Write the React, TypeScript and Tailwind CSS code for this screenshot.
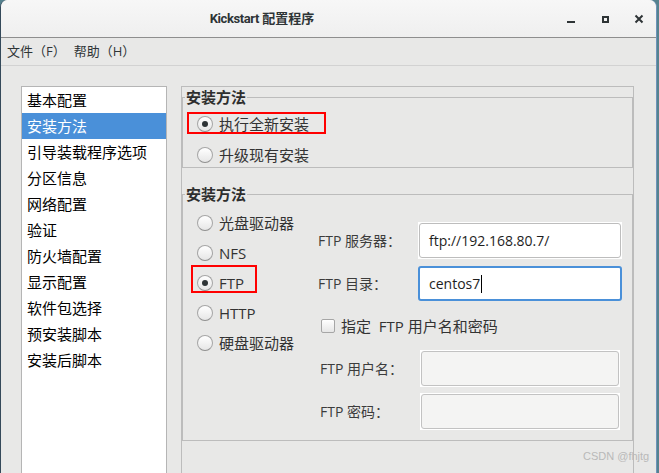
import React from "react";

const FONT = "font-['Open_Sans','Noto_Sans_CJK_SC',sans-serif]";

const navItems = [
  "基本配置",
  "安装方法",
  "引导装载程序选项",
  "分区信息",
  "网络配置",
  "验证",
  "防火墙配置",
  "显示配置",
  "软件包选择",
  "预安装脚本",
  "安装后脚本",
];

const sources = ["光盘驱动器", "NFS", "FTP", "HTTP", "硬盘驱动器"];

const Radio = ({ checked }: { checked?: boolean }) => (
  <span className="flex h-[16px] w-[16px] shrink-0 items-center justify-center rounded-full border border-[#a6a6a6] border-b-[#8f8f8f] bg-linear-to-b from-white to-[#e6e6e6]">
    {checked && <span className="h-[6px] w-[6px] rounded-full bg-[#2e3436]" />}
  </span>
);

// radio row, the red annotation box is drawn over it
const RadioRow = ({
  label,
  checked,
  mark,
}: {
  label: string;
  checked?: boolean;
  mark?: string;
}) => (
  <div className="relative flex h-[24px] items-center gap-[6px]">
    <Radio checked={checked} />
    <span className="text-[15px] text-[#333]">{label}</span>
    {mark && <span className={`absolute border-2 border-[#ff0000] ${mark}`} />}
  </div>
);

const Group = ({
  title,
  className,
  children,
}: {
  title: string;
  className?: string;
  children: React.ReactNode;
}) => (
  <fieldset className={`border border-[#bcbcbc] ${className ?? ""}`}>
    <legend className="ml-[2px] px-[1px] text-[15px] font-bold leading-[20px] text-[#2e2e2e]">
      {title}
    </legend>
    {children}
  </fieldset>
);

const TitleBar = () => (
  <div className="flex h-[38px] shrink-0 items-center rounded-t-[7px] border-b border-[#8e8e8e] bg-linear-to-b from-[#f7f7f7] to-[#efefef]">
    <div className="flex w-[522px] justify-center">
      <span className="text-[13px] font-bold text-[#2e3436]">
        <span className="font-['Roboto',sans-serif] text-[13px] tracking-[-0.4px]">Kickstart</span>{" "}
        配置程序
      </span>
    </div>
    <div className="flex items-center text-[#2e3436]">
      <svg width="10" height="10" viewBox="0 0 10 10" className="ml-[43px]">
        <rect x="1" y="7" width="8" height="2" fill="currentColor" />
      </svg>
      <svg width="7" height="7" viewBox="0 0 7 7" className="ml-[26px] mt-[1px]">
        <rect x="1" y="1" width="5" height="5" fill="none" stroke="currentColor" strokeWidth="2" />
      </svg>
      <svg width="10" height="10" viewBox="0 0 10 10" className="ml-[25px]">
        <path d="M1.5 1.5 L8.5 8.5 M8.5 1.5 L1.5 8.5" stroke="currentColor" strokeWidth="2" />
      </svg>
    </div>
  </div>
);

const FieldRow = ({
  label,
  children,
  className,
}: {
  label: string;
  children: React.ReactNode;
  className?: string;
}) => (
  <div className={`flex items-center ${className ?? ""}`}>
    <span className="w-[100px] text-[14px] text-[#3c3c3c]">{label}</span>
    {children}
  </div>
);

export default function App() {
  return (
    <div className={`relative h-[473px] w-[659px] overflow-hidden bg-[#55828f] ${FONT}`}>
      <div className="flex h-full w-[657px] flex-col rounded-t-[7px] border-l border-r border-l-[#34495a] border-r-[#6d93ba] bg-[#e8e8e7]">
        <TitleBar />

        <div className="flex h-[28px] shrink-0 items-center border-b border-[#d2d2d2] text-[13px] text-[#2e3436]">
          <span className="ml-[6px]">文件（F）</span>
          <span className="ml-[8px]">帮助（H）</span>
        </div>

        <div className="flex min-h-0 flex-1 pl-[20px] pt-[20px]">
          <ul className="w-[146px] border border-b-0 border-[#b5b5b5] bg-white text-[15px] text-black">
            {navItems.map((item, i) => (
              <li
                key={item}
                className={`flex h-[26px] items-center pl-[5px] ${
                  i === 1 ? "bg-[#4a90d9] text-white" : ""
                }`}
              >
                {item}
              </li>
            ))}
          </ul>

          <div className="ml-[14px] w-[453px] border border-b-0 border-[#bcbcbc]">
            <Group title="安装方法" className="h-[81px]">
              <div className="flex flex-col gap-[7px] pl-[14px] pt-[5px]">
                <RadioRow
                  label="执行全新安装"
                  checked
                  mark="left-[-10px] top-0 h-[22px] w-[139px]"
                />
                <RadioRow label="升级现有安装" />
              </div>
            </Group>

            <Group title="安装方法" className="mt-[16px]">
              <div className="flex">
                <div className="flex w-[135px] flex-col gap-[6px] pl-[14px] pt-[7px]">
                  {sources.map(s => (
                    <RadioRow
                      key={s}
                      label={s}
                      checked={s === "FTP"}
                      mark={s === "FTP" ? "left-[-6px] top-[-6px] h-[28px] w-[66px]" : undefined}
                    />
                  ))}
                </div>

                <div className="flex flex-col pb-[10px] pt-[18px]">
                  <FieldRow label="FTP 服务器：" className="h-[37px]">
                    <div className="h-full w-[204px] bg-white p-px">
                      <div className="flex h-full items-center rounded-[3px] border border-[#bdbdbd] bg-white pl-[9px] text-[14px] text-[#1e1e1e]">
                        ftp://192.168.80.7/
                      </div>
                    </div>
                  </FieldRow>

                  <FieldRow label="FTP 目录：" className="mt-[7px] h-[35px]">
                    <div className="flex h-full w-[204px] items-center rounded-[3px] border-2 border-[#4a90d9] bg-white pl-[9px] text-[14px] text-[#1e1e1e]">
                      centos7
                      <span className="ml-px h-[18px] w-px bg-black" />
                    </div>
                  </FieldRow>

                  <div className="mt-[15px] flex h-[20px] items-center gap-[6px] pl-[3px]">
                    <span className="h-[14px] w-[14px] rounded-[2px] border border-[#a6a6a6] bg-linear-to-b from-white to-[#e6e6e6]" />
                    <span className="whitespace-pre text-[15px] text-[#333]">指定  FTP 用户名和密码</span>
                  </div>

                  <FieldRow label="FTP 用户名：" className="mt-[14px] h-[37px] pl-[2px]">
                    <div className="h-full w-[200px] bg-white p-px">
                      <div className="h-full rounded-[3px] border border-[#c2c2c2] bg-[#f4f4f3]" />
                    </div>
                  </FieldRow>

                  <FieldRow label="FTP 密码：" className="mt-[6px] h-[37px] pl-[2px]">
                    <div className="h-full w-[200px] bg-white p-px">
                      <div className="h-full rounded-[3px] border border-[#c2c2c2] bg-[#f4f4f3]" />
                    </div>
                  </FieldRow>
                </div>
              </div>
            </Group>
          </div>
        </div>
      </div>

      <span className="absolute bottom-[9px] left-[583px] font-['Liberation_Sans',sans-serif] text-[11px] text-[#b9b9b9]">
        CSDN @fhjtg
      </span>
    </div>
  );
}
